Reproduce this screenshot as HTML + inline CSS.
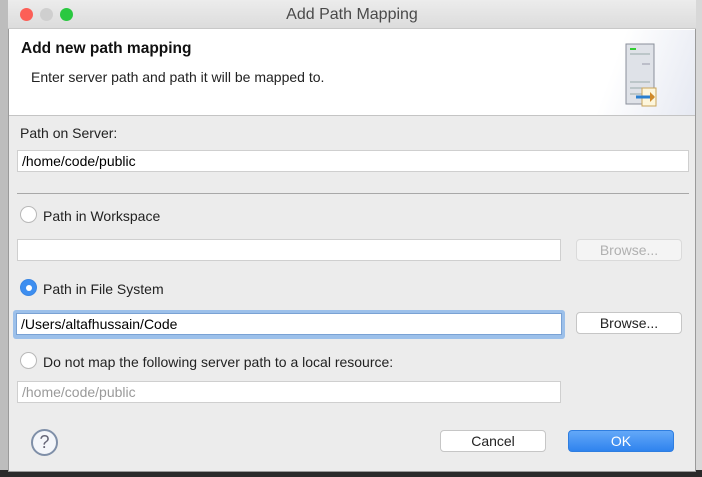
<!DOCTYPE html>
<html><head><style>
*{margin:0;padding:0;box-sizing:border-box}
body{width:702px;height:477px;overflow:hidden;background:#d8d8d8;font-family:"Liberation Sans",sans-serif;position:relative}
.a{position:absolute}
.win{left:8px;top:0;width:688px;height:472px;background:#ececec;border:1px solid #9a9a9a;border-top:none}
.title{left:8px;top:0;width:688px;height:29px;background:linear-gradient(#ececec,#dcdcdc);border-bottom:1px solid #c8c8c8;text-align:center;font-size:16px;color:#4a4a4a;line-height:29px}
.dot{width:13px;height:13px;border-radius:50%;top:8px}
.hdr{left:9px;top:29px;width:686px;height:87px;background:#fff;border-bottom:1px solid #c4c4c4}
.t{font-size:14px;color:#222}
.inp{background:#fff;border:1px solid #cfcfcf;height:22px;font-size:14px;line-height:20px;padding-left:4px}
.btn{background:#fff;border:1px solid #c6c6c6;border-radius:4px;height:22px;text-align:center;font-size:14px;line-height:20px;color:#222}
.rad{width:17px;height:17px;border-radius:50%;background:#fff;border:1px solid #b8b8b8}
</style></head><body>
<div class="a" style="left:0;top:0;width:8px;height:477px;background:#bdbdbd"></div>
<div class="a" style="left:0;top:470px;width:702px;height:7px;background:#2a2a2a"></div>
<div class="a win"></div>
<div class="a title">Add Path Mapping</div>
<div class="a dot" style="left:20px;background:#fc5f57"></div>
<div class="a dot" style="left:40px;background:#cfcfcf"></div>
<div class="a dot" style="left:60px;background:#2ac840"></div>
<div class="a hdr"></div>
<div class="a" style="left:560px;top:30px;width:135px;height:85px;background:linear-gradient(110deg,#fff 40%,#e6e9f2)"></div>
<div class="a" style="left:21px;top:40px;font-size:15.5px;font-weight:bold;color:#111">Add new path mapping</div>
<div class="a t" style="left:31px;top:69px">Enter server path and path it will be mapped to.</div>
<svg class="a" style="left:620px;top:42px" width="40" height="66">
<rect x="6" y="2" width="28" height="60" fill="#dfe2e8" stroke="#8a8f9a"/>
<rect x="10" y="6" width="6" height="2" fill="#3c3"/>
<line x1="10" y1="12" x2="30" y2="12" stroke="#9aa"/><line x1="22" y1="22" x2="30" y2="22" stroke="#99a"/>
<line x1="10" y1="40" x2="30" y2="40" stroke="#9aa"/><line x1="10" y1="46" x2="30" y2="46" stroke="#9aa"/><line x1="10" y1="52" x2="30" y2="52" stroke="#9aa"/>
<rect x="22" y="46" width="14" height="18" fill="#fdf6dc" stroke="#c9a45a"/>
<path d="M16 55h18" stroke="#2a7fd0" stroke-width="3"/><path d="M30 50l5 5-5 5z" fill="#d08a2a"/>
</svg>
<div class="a t" style="left:20px;top:125px">Path on Server:</div>
<div class="a inp" style="left:17px;top:150px;width:672px">/home/code/public</div>
<div class="a" style="left:17px;top:193px;width:672px;height:1px;background:#a8a8a8"></div>
<div class="a rad" style="left:20px;top:206px"></div>
<div class="a t" style="left:43px;top:208px">Path in Workspace</div>
<div class="a inp" style="left:17px;top:239px;width:544px"></div>
<div class="a btn" style="left:576px;top:239px;width:106px;color:#b0b0b0;background:#f4f4f4;border-color:#dadada">Browse...</div>
<div class="a rad" style="left:20px;top:279px;background:#3d8ef0;border-color:#3a86e4"></div>
<div class="a" style="left:26px;top:285px;width:6px;height:6px;border-radius:50%;background:#fff"></div>
<div class="a t" style="left:43px;top:281px">Path in File System</div>
<div class="a" style="left:13px;top:310px;width:552px;height:29px;border-radius:3px;background:#9cc0ea"></div>
<div class="a inp" style="left:16px;top:313px;width:546px;border-color:#7aa2d4">/Users/altafhussain/Code</div>
<div class="a btn" style="left:576px;top:312px;width:106px">Browse...</div>
<div class="a rad" style="left:20px;top:352px"></div>
<div class="a t" style="left:43px;top:354px">Do not map the following server path to a local resource:</div>
<div class="a inp" style="left:17px;top:381px;width:544px;color:#9a9a9a">/home/code/public</div>
<div class="a" style="left:31px;top:429px;width:27px;height:27px;border-radius:50%;border:2px solid #7f8fa8;background:#f4f6fa;text-align:center;font-size:18px;line-height:23px;color:#667">?</div>
<div class="a btn" style="left:440px;top:430px;width:106px">Cancel</div>
<div class="a btn" style="left:568px;top:430px;width:106px;background:linear-gradient(#63a8f8,#2f83ee);border-color:#2f7ee0;color:#fff">OK</div>
</body></html>
